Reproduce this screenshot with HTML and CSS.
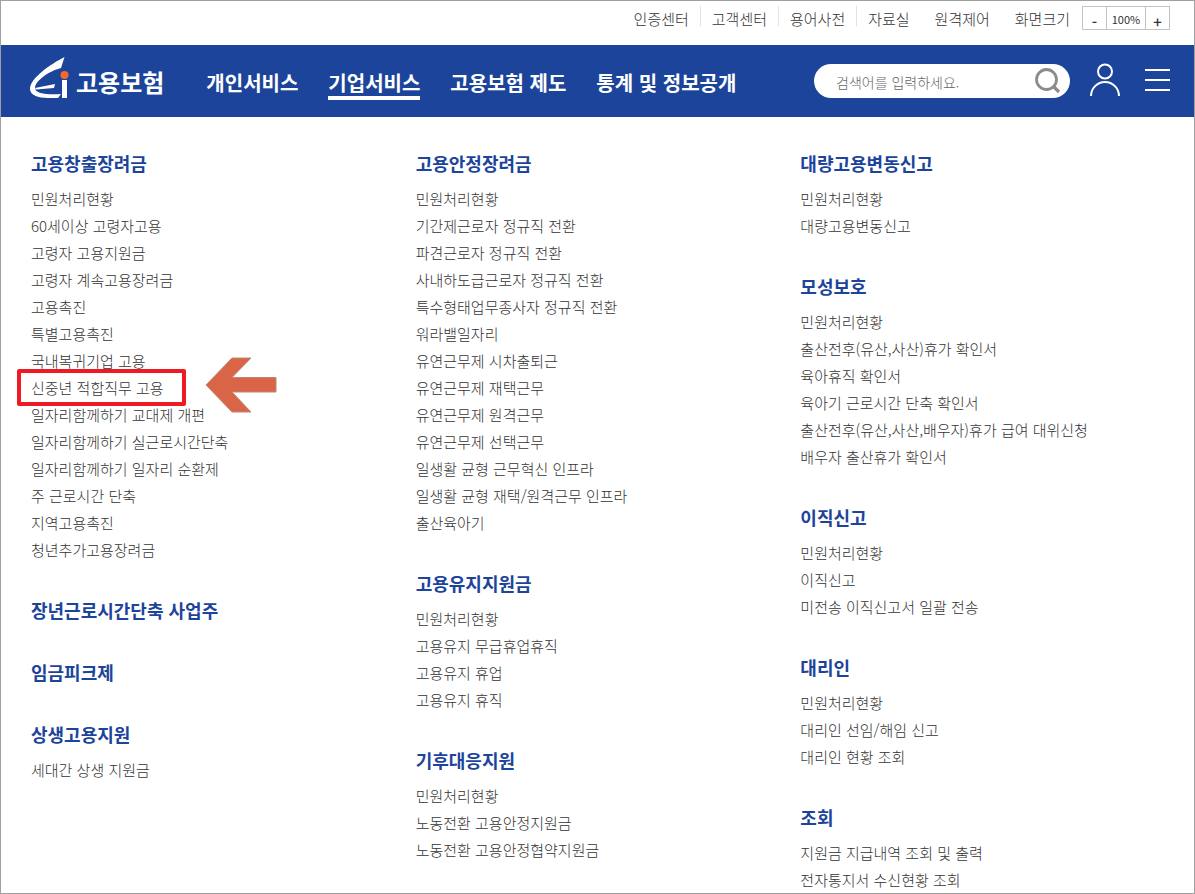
FILE: index.html
```html
<!DOCTYPE html>
<html lang="ko">
<head>
<meta charset="utf-8">
<title>고용보험</title>
<link rel="stylesheet" href="styles.css">
</head>
<body>
<div class="page">
  <div class="utility">
    <ul class="utility-links">
      <li><a href="#">인증센터</a></li>
      <li><a href="#">고객센터</a></li>
      <li><a href="#">용어사전</a></li>
      <li><a href="#">자료실</a></li>
    </ul>
    <a class="remote" href="#">원격제어</a>
    <span class="size-label" id="size-label">화면크기</span>
    <div class="zoom" role="group" aria-labelledby="size-label">
      <button type="button" aria-label="축소">-</button>
      <span class="zoom-value">100%</span>
      <button type="button" aria-label="확대">+</button>
    </div>
  </div>

  <header class="header">
    <a class="logo" href="#">
      <svg class="logo-mark" viewBox="0 0 40 44" aria-hidden="true">
        <path fill="#fff" d="M35.500 1C22 8 1 22 1 33c0 6 8 9 18 9h10l3-4C20 39 6 38 6 32 6 25 20 15 32 12z"/>
        <path fill="#fff" d="M6 32 26 28 25 32 7 33.500z"/>
        <rect fill="#fff" x="33" y="24" width="5" height="18"/>
        <circle fill="#f26a25" cx="35.500" cy="19" r="4"/>
      </svg>
      <span>고용보험</span>
    </a>
    <nav class="main-nav">
      <a href="#">개인서비스</a>
      <a class="active" href="#">기업서비스</a>
      <a href="#">고용보험 제도</a>
      <a href="#">통계 및 정보공개</a>
    </nav>
    <form class="search">
      <input type="text" aria-label="검색어" placeholder="검색어를 입력하세요.">
      <button type="submit" aria-label="검색">
        <svg viewBox="0 0 28 28" fill="none" stroke="#8c8c8c"><circle cx="12.500" cy="12.500" r="10" stroke-width="2.800"/><path d="m19 19 6 6" stroke-width="3.200"/></svg>
      </button>
    </form>
    <button class="icon-button user" type="button" aria-label="로그인">
      <svg viewBox="0 0 32 34" fill="none" stroke="#fff" stroke-width="2"><circle cx="16" cy="8.500" r="7"/><path d="M2 33a14 14 0 0 1 28 0"/></svg>
    </button>
    <button class="icon-button menu" type="button" aria-label="전체메뉴">
      <svg viewBox="0 0 25 22" stroke="#fff" stroke-width="2"><path d="M0 1h25M0 11h25M0 21h25"/></svg>
    </button>
  </header>

  <main class="sitemap">
    <div class="column">
      <section>
        <h2>고용창출장려금</h2>
        <ul>
          <li><a href="#">민원처리현황</a></li>
          <li><a href="#">60세이상 고령자고용</a></li>
          <li><a href="#">고령자 고용지원금</a></li>
          <li><a href="#">고령자 계속고용장려금</a></li>
          <li><a href="#">고용촉진</a></li>
          <li><a href="#">특별고용촉진</a></li>
          <li><a href="#">국내복귀기업 고용</a></li>
          <li class="marked">
            <a href="#">신중년 적합직무 고용</a>
            <svg class="arrow" viewBox="0 0 72 56" aria-hidden="true"><path fill="#d96546" stroke="#b98a78" stroke-width="1" d="M1 28 27 1H46L27 20.500H71V35H27L46 55H27z"/></svg>
          </li>
          <li><a href="#">일자리함께하기 교대제 개편</a></li>
          <li><a href="#">일자리함께하기 실근로시간단축</a></li>
          <li><a href="#">일자리함께하기 일자리 순환제</a></li>
          <li><a href="#">주 근로시간 단축</a></li>
          <li><a href="#">지역고용촉진</a></li>
          <li><a href="#">청년추가고용장려금</a></li>
        </ul>
      </section>
      <section><h2>장년근로시간단축 사업주</h2></section>
      <section><h2>임금피크제</h2></section>
      <section>
        <h2>상생고용지원</h2>
        <ul>
          <li><a href="#">세대간 상생 지원금</a></li>
        </ul>
      </section>
    </div>

    <div class="column">
      <section>
        <h2>고용안정장려금</h2>
        <ul>
          <li><a href="#">민원처리현황</a></li>
          <li><a href="#">기간제근로자 정규직 전환</a></li>
          <li><a href="#">파견근로자 정규직 전환</a></li>
          <li><a href="#">사내하도급근로자 정규직 전환</a></li>
          <li><a href="#">특수형태업무종사자 정규직 전환</a></li>
          <li><a href="#">워라밸일자리</a></li>
          <li><a href="#">유연근무제 시차출퇴근</a></li>
          <li><a href="#">유연근무제 재택근무</a></li>
          <li><a href="#">유연근무제 원격근무</a></li>
          <li><a href="#">유연근무제 선택근무</a></li>
          <li><a href="#">일생활 균형 근무혁신 인프라</a></li>
          <li><a href="#">일생활 균형 재택/원격근무 인프라</a></li>
          <li><a href="#">출산육아기</a></li>
        </ul>
      </section>
      <section>
        <h2>고용유지지원금</h2>
        <ul>
          <li><a href="#">민원처리현황</a></li>
          <li><a href="#">고용유지 무급휴업휴직</a></li>
          <li><a href="#">고용유지 휴업</a></li>
          <li><a href="#">고용유지 휴직</a></li>
        </ul>
      </section>
      <section>
        <h2>기후대응지원</h2>
        <ul>
          <li><a href="#">민원처리현황</a></li>
          <li><a href="#">노동전환 고용안정지원금</a></li>
          <li><a href="#">노동전환 고용안정협약지원금</a></li>
        </ul>
      </section>
    </div>

    <div class="column">
      <section>
        <h2>대량고용변동신고</h2>
        <ul>
          <li><a href="#">민원처리현황</a></li>
          <li><a href="#">대량고용변동신고</a></li>
        </ul>
      </section>
      <section>
        <h2>모성보호</h2>
        <ul>
          <li><a href="#">민원처리현황</a></li>
          <li><a href="#">출산전후(유산,사산)휴가 확인서</a></li>
          <li><a href="#">육아휴직 확인서</a></li>
          <li><a href="#">육아기 근로시간 단축 확인서</a></li>
          <li><a href="#">출산전후(유산,사산,배우자)휴가 급여 대위신청</a></li>
          <li><a href="#">배우자 출산휴가 확인서</a></li>
        </ul>
      </section>
      <section>
        <h2>이직신고</h2>
        <ul>
          <li><a href="#">민원처리현황</a></li>
          <li><a href="#">이직신고</a></li>
          <li><a href="#">미전송 이직신고서 일괄 전송</a></li>
        </ul>
      </section>
      <section>
        <h2>대리인</h2>
        <ul>
          <li><a href="#">민원처리현황</a></li>
          <li><a href="#">대리인 선임/해임 신고</a></li>
          <li><a href="#">대리인 현황 조회</a></li>
        </ul>
      </section>
      <section>
        <h2>조회</h2>
        <ul>
          <li><a href="#">지원금 지급내역 조회 및 출력</a></li>
          <li><a href="#">전자통지서 수신현황 조회</a></li>
        </ul>
      </section>
    </div>
  </main>
</div>
</body>
</html>
```
FILE: styles.css
```css
*, ::before { box-sizing: border-box; }

body {
  margin: 0;
  background: #fff;
  color: #333;
  font: 300 15px/27px "Noto Sans CJK KR", sans-serif;
}

a { color: inherit; text-decoration: none; }
ul { margin: 0; padding: 0; list-style: none; }
button { padding: 0; border: 0; background: none; color: inherit; font: inherit; cursor: pointer; }
svg { display: block; }

.page {
  min-height: 100vh;
  border: 1px solid #a0a0a0;
}

.utility {
  display: flex;
  justify-content: flex-end;
  height: 44px;
  padding: 5px 24px 0 0;
  line-height: 25px;
  white-space: nowrap;
}
.utility-links { display: flex; }
.utility-links li { display: flex; }
.utility-links li + li::before {
  content: "";
  height: 20px;
  margin: 0 11px;
  border-left: 1px solid #e2e2e2;
}
.remote { margin: 0 25px; }
.size-label { margin-right: 12px; }

.zoom {
  display: flex;
  height: 24px;
  border: 1px solid #c4c4c4;
  line-height: 24px;
}
.zoom button { width: 23px; font-weight: 500; line-height: 30px; }
.zoom-value {
  width: 40px;
  border: solid #c4c4c4;
  border-width: 0 1px;
  font-size: 11px;
  font-weight: 400;
  text-align: center;
}

.header {
  display: flex;
  align-items: center;
  height: 72px;
  padding: 0 24px 0 28px;
  background: #1c449b;
  color: #fff;
  white-space: nowrap;
}
.logo {
  display: flex;
  align-items: center;
  gap: 7px;
  margin-right: 42px;
  font-size: 24px;
  font-weight: 700;
}
.logo-mark { width: 40px; height: 44px; margin-bottom: 6px; }
.main-nav {
  display: flex;
  gap: 30px;
  margin-top: 7px;
  font-size: 20px;
  font-weight: 700;
}
.main-nav a { border-bottom: 4px solid transparent; }
.main-nav .active { border-color: #fff; }

.search {
  display: flex;
  align-items: center;
  width: 256px;
  height: 34px;
  margin-left: auto;
  padding: 0 8px 0 22px;
  border-radius: 17px;
  background: #fff;
}
.search input {
  flex: 1;
  min-width: 0;
  padding: 2px 0 0;
  border: 0;
  outline: 0;
  background: none;
  color: #333;
  font: inherit;
  font-size: 14px;
}
.search input::placeholder { color: #666; }
.search svg { width: 28px; height: 28px; }
.icon-button { margin-bottom: 2px; }
.user { margin-left: 19px; margin-right: 24px; }
.user svg { width: 32px; height: 34px; }
.menu svg { width: 25px; height: 22px; }

.sitemap {
  display: grid;
  grid-template-columns: repeat(3, 1fr);
  margin-bottom: -4px;
  padding: 33px 9px 0 30px;
}
.column { display: flex; flex-direction: column; gap: 34px; }
.column h2 {
  margin: 0 0 8px;
  color: #1c449b;
  font-size: 18px;
  font-weight: 700;
  line-height: 27px;
}
.column h2:only-child { margin-bottom: 1px; }

.marked { position: relative; }
.marked::before {
  content: "";
  position: absolute;
  inset: -5px auto -5px -14px;
  width: 169px;
  border: 4px solid #ed1c24;
  border-radius: 2px;
}
.marked a { position: relative; }
.arrow {
  position: absolute;
  top: -17px;
  left: 174px;
  width: 72px;
  height: 56px;
}
```
